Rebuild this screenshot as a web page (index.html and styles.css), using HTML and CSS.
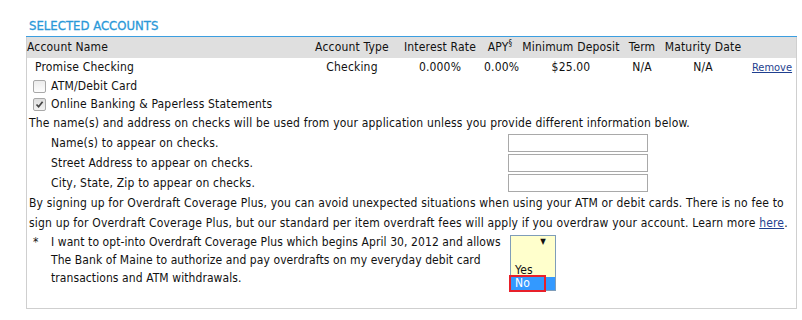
FILE: index.html
```html
<!DOCTYPE html>
<html lang="en">
<head>
    <meta charset="UTF-8">
    <title>Selected Accounts</title>
    <link rel="stylesheet" href="styles.css">
</head>
<body>
    <div class="section">
        <h2 class="section-title">SELECTED ACCOUNTS</h2>

        <div class="panel">
            <!-- Column headings -->
            <div class="acct-grid acct-head">
                <span class="col-name">Account Name</span>
                <span>Account Type</span>
                <span>Interest Rate</span>
                <span class="apy">APY<sup>§</sup></span>
                <span>Minimum Deposit</span>
                <span>Term</span>
                <span>Maturity Date</span>
                <span></span>
            </div>

            <!-- Account row -->
            <div class="acct-grid acct-row">
                <span class="col-name product-name">Promise Checking</span>
                <span>Checking</span>
                <span>0.000%</span>
                <span>0.00%</span>
                <span>$25.00</span>
                <span>N/A</span>
                <span>N/A</span>
                <span><a href="#" class="remove">Remove</a></span>
            </div>

            <div class="option">
                <span class="checkbox"></span>
                <span>ATM/Debit Card</span>
            </div>
            <div class="option">
                <span class="checkbox checked">
                    <svg width="9" height="9" viewBox="0 0 9 9"><path d="M1.5 4.5 L3.6 6.8 L7.6 1.8" fill="none" stroke="#444" stroke-width="1.7"/></svg>
                </span>
                <span>Online Banking &amp; Paperless Statements</span>
            </div>

            <p class="line first-line">The name(s) and address on checks will be used from your application unless you provide different information below.</p>

            <div class="field">
                <label>Name(s) to appear on checks.</label>
                <span class="text-box"></span>
            </div>
            <div class="field">
                <label>Street Address to appear on checks.</label>
                <span class="text-box"></span>
            </div>
            <div class="field">
                <label>City, State, Zip to appear on checks.</label>
                <span class="text-box"></span>
            </div>

            <p class="line">By signing up for Overdraft Coverage Plus, you can avoid unexpected situations when using your ATM or debit cards. There is no fee to sign up for Overdraft Coverage Plus, but our standard per item overdraft fees will apply if you overdraw your account. Learn more <a href="#" class="link">here</a>.</p>

            <div class="optin">
                <span class="star">*</span>
                <p class="optin-text">I want to opt-into Overdraft Coverage Plus which begins April 30, 2012 and allows<br>The Bank of Maine to authorize and pay overdrafts on my everyday debit card<br>transactions and ATM withdrawals.</p>
                <div class="select-wrap">
                    <div class="select-box"><span class="arrow">&#9660;</span></div>
                    <div class="select-list">
                        <div class="select-item">Yes</div>
                        <div class="select-item selected">No</div>
                    </div>
                </div>
            </div>
        </div>
    </div>
</body>
</html>
```

FILE: styles.css
```css
/* Basic Styling */
body {
    margin: 0;
    font-family: "DejaVu Sans Condensed", "DejaVu Sans", sans-serif;
    font-size: 12px;
    letter-spacing: 0.18px;
    color: #111;
    background: #fff;
}
.section {
    padding: 16px 5px 0 26px;
}
.section-title {
    margin: 0;
    padding-left: 3px;
    height: 20px;
    line-height: 20px;
    font-size: 13px;
    font-weight: normal;
    letter-spacing: 0;
    color: #2a98d8;
    -webkit-text-stroke: 0.3px #2a98d8;
    border-bottom: 1px solid #3b9ee0;
}
.panel {
    border: 1px solid #cfcfcf;
    border-top: none;
    padding-bottom: 21px;
}

/* Account table */
.acct-grid {
    display: grid;
    grid-template-columns: 281px 88px 88px 32px 110px 32px 90px 48px;
    text-align: center;
    white-space: nowrap;
}
.acct-head {
    background: #dfdfdf;
    line-height: 21px;
}
.acct-row {
    line-height: 19px;
}
.col-name {
    text-align: left;
}
.product-name {
    padding-left: 8px;
}
.apy sup {
    font-size: 8px;
    line-height: 0;
    vertical-align: 5px;
}
.remove {
    font-size: 11px;
    letter-spacing: 0;
    color: #1f3f8f;
}

/* Checkboxes */
.option {
    display: flex;
    align-items: center;
    gap: 5px;
    padding-left: 6px;
    height: 18px;
}
.checkbox {
    display: inline-flex;
    align-items: center;
    justify-content: center;
    width: 11px;
    height: 11px;
    border: 1px solid #a8a8a8;
    border-radius: 2px;
    background: linear-gradient(#ececec, #fdfdfd);
}
.checked {
    background: linear-gradient(#dedede, #f2f2f2);
}

.line {
    margin: 0;
    padding-left: 2px;
    line-height: 20px;
}
.first-line {
    padding-top: 1px;
    line-height: 19px;
}
.link {
    color: #1f3f8f;
}

/* Check info fields */
.field {
    display: flex;
    align-items: center;
    height: 20px;
    padding-left: 24px;
}
.field label {
    width: 457px;
}
.text-box {
    width: 138px;
    height: 16px;
    border: 1px solid #a9a9a9;
    background: #fff;
}

/* Opt-in */
.optin {
    display: flex;
    align-items: flex-start;
}
.star {
    width: 24px;
    padding-left: 6px;
    box-sizing: border-box;
    line-height: 18px;
}
.optin-text {
    margin: 0;
    width: 459px;
    line-height: 18px;
    letter-spacing: 0.08px;
}
.select-wrap {
    position: relative;
    margin-top: 2px;
}
.select-box {
    width: 44px;
    height: 15px;
    border: 1px solid #7f9db9;
    background: #ffffcc;
    position: relative;
}
.arrow {
    position: absolute;
    right: 9px;
    top: 1px;
    font-size: 8px;
    color: #111;
}
.select-list {
    position: absolute;
    left: 0;
    top: 16px;
    width: 44px;
    height: 39px;
    border: 1px solid #7f9db9;
    border-top: none;
    background: #ffffcc;
    display: flex;
    flex-direction: column;
    justify-content: flex-end;
}
.select-item {
    padding-left: 4px;
    height: 13px;
    line-height: 13px;
    font-size: 12px;
}
.select-item.selected {
    background: #3399ff;
    color: #fff;
    outline: 2px solid #e8202a;
    width: 29px;
    margin-left: 0;
    padding-left: 4px;
    box-shadow: 11px 0 0 #3399ff;
}
```
